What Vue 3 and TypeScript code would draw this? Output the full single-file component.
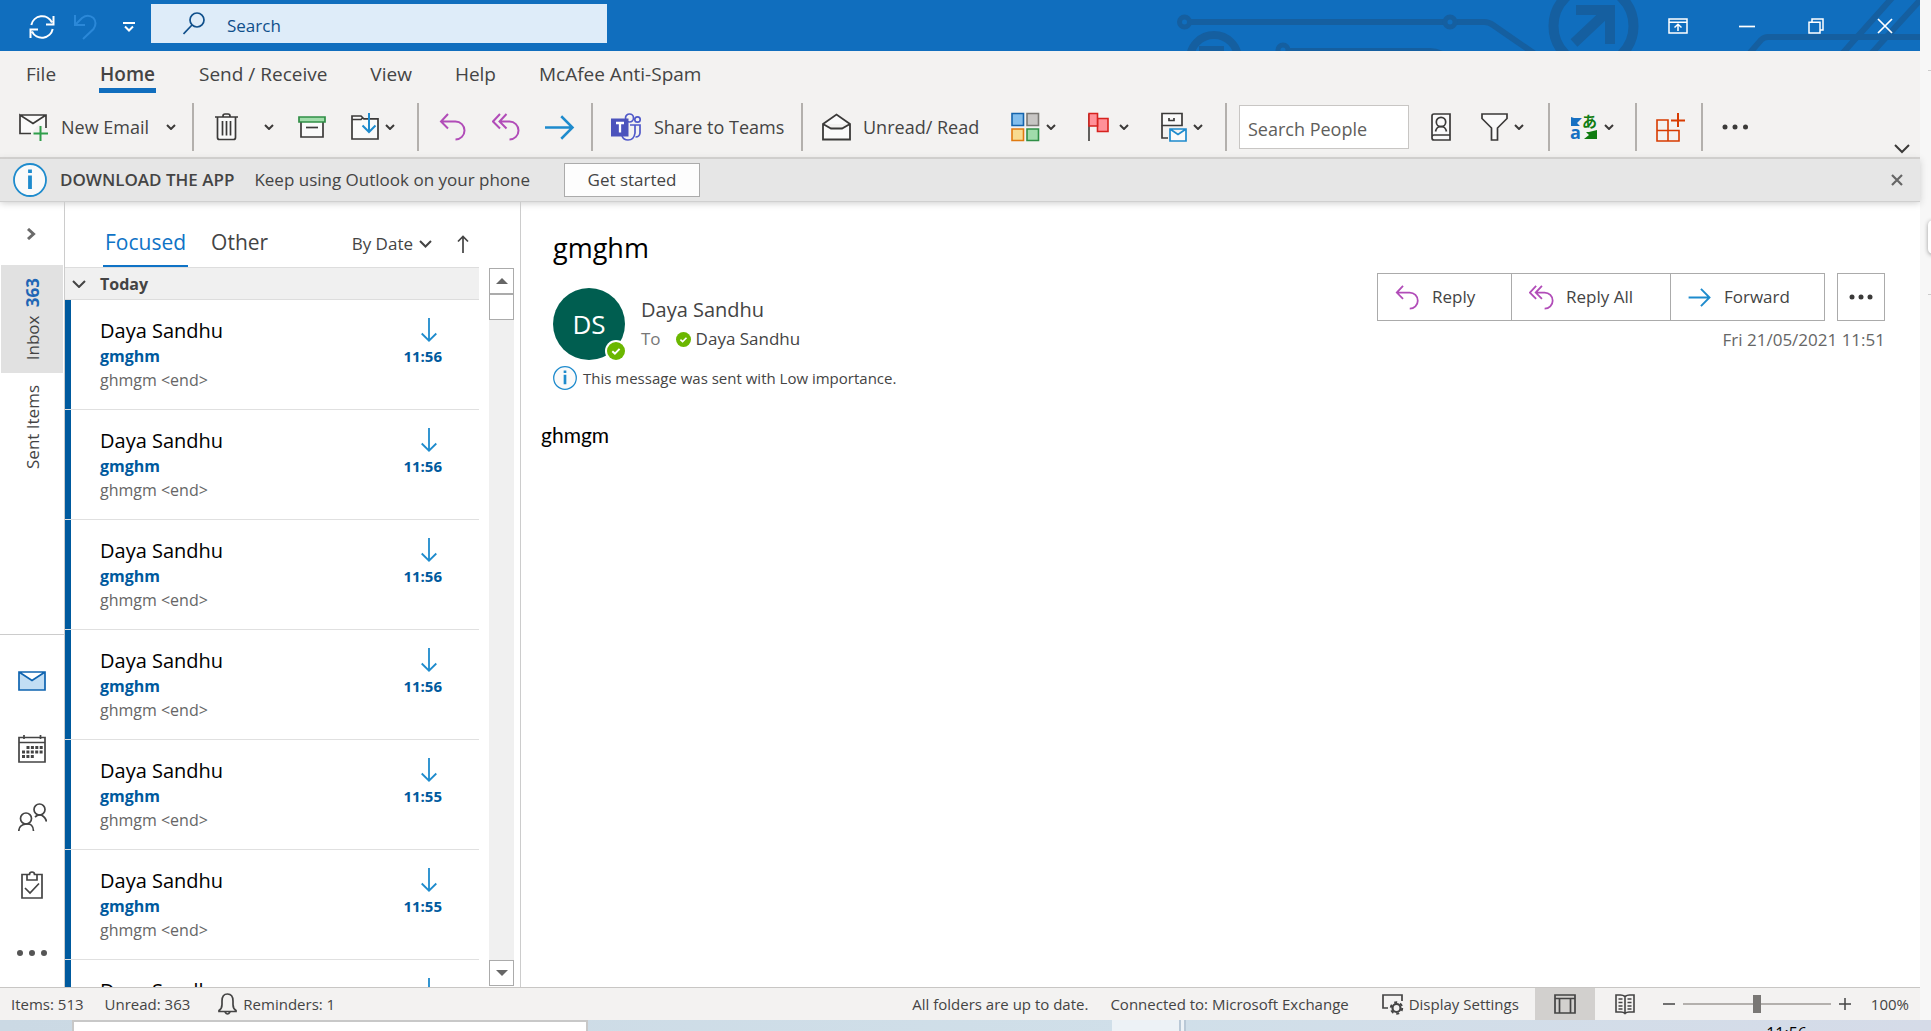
<script setup lang="ts">
import { ref } from 'vue'

interface Message {
  id: number
  sender: string
  subject: string
  preview: string
  time: string
}

const tabs = ['File', 'Home', 'Send / Receive', 'View', 'Help', 'McAfee Anti-Spam']
const activeTab = ref('Home')
const searchText = ref('')
const peopleText = ref('')
const zoom = ref(50)

const times = ['11:56', '11:56', '11:56', '11:56', '11:55', '11:55', '11:55']
const messages: Message[] = times.map((time, id) => ({
  id,
  sender: 'Daya Sandhu',
  subject: 'gmghm',
  preview: 'ghmgm <end>',
  time,
}))
</script>

<template>
  <div class="desktop">
    <svg class="symbols" aria-hidden="true">
      <symbol id="i-chev" viewBox="0 0 10 6"><path d="M1 1l4 4 4-4" fill="none" stroke="#3b3a39" stroke-width="2" /></symbol>
      <symbol id="i-reply" viewBox="0 0 28 28"><path d="M9 1L2 8.500l7 7M2 8.500h14.500a9 9 0 0 1 0 18" fill="none" stroke="#b14cb8" stroke-width="2" /></symbol>
      <symbol id="i-replyall" viewBox="0 0 28 28"><path d="M8 1L1 8.500l7 7M14.500 1l-7 7.500 7 7M7.500 8.500h10a9 9 0 0 1 0 18" fill="none" stroke="#b14cb8" stroke-width="2" /></symbol>
      <symbol id="i-forward" viewBox="0 0 24 20"><path d="M0 10h22M13 1l9 9-9 9" fill="none" stroke="#1e8bcd" stroke-width="2" /></symbol>
      <symbol id="i-down" viewBox="0 0 16 24"><path d="M8 0v23M.7 15.500L8 22.700l7.300-7.200" fill="none" stroke="#1e8bcd" stroke-width="1.800" /></symbol>
      <symbol id="i-check" viewBox="0 0 18 18"><circle cx="9" cy="9" r="9" fill="#6bb700" /><path d="M5.300 9.200l2.600 2.400 4.700-4.700" fill="none" stroke="#fff" stroke-width="2" /></symbol>
      <symbol id="i-info" viewBox="0 0 34 34"><circle cx="17" cy="17" r="16" fill="#fafafa" stroke="#1e8bcd" stroke-width="1.800" /><path d="M17 6.500v3.500M17 12.500v13.500" stroke="#1e8bcd" stroke-width="3.800" /></symbol>
    </svg>

    <div class="screen">
      <div class="window">
        <header class="titlebar">
          <svg class="circuit" viewBox="0 0 750 51" aria-hidden="true">
            <g fill="none" stroke="#155fa0" stroke-width="6">
              <circle cx="14.500" cy="22" r="5" stroke-width="5" />
              <path d="M21 22H275M287 22h27q5 0 9 3l42 29" />
              <circle cx="280" cy="22" r="5" stroke-width="5" />
              <circle cx="44" cy="59" r="24" stroke-width="8" />
              <circle cx="113" cy="50" r="5" stroke-width="5" />
              <path d="M120 51h140q6 0 12 3" />
              <circle cx="423.500" cy="26" r="40" stroke-width="10" />
              <path d="M406 10h34v34M404 43l34-32" stroke-width="10" />
              <path d="M578 55l13-15q3-3 7-3h152M671 55l51-57M700 55l52-57" />
            </g>
            <path d="M29 46h25v5H29z" fill="#155fa0" />
          </svg>
          <div class="quick">
            <button class="bare sync" aria-label="Send/Receive all folders">
              <svg width="26" height="26" viewBox="0 0 26 26" fill="none" stroke="#fff" stroke-width="2"><path d="M2.300 11A11 11 0 0 1 23 8.500M24.500 2v8.500H17M23.700 15A11 11 0 0 1 3 17.500M1.500 24v-8.500H9" /></svg>
            </button>
            <button class="bare undo" aria-label="Undo">
              <svg width="24" height="26" viewBox="0 0 24 26" fill="none" stroke="#2b88d8" stroke-width="2"><path d="M1 1v10h10M1.500 10.500L8 4q6-4.500 11.500 0 4 5 0 11L9 25" /></svg>
            </button>
            <button class="bare more" aria-label="Customise Quick Access Toolbar">
              <svg width="12" height="10" viewBox="0 0 12 10" fill="none" stroke="#fff" stroke-width="2"><path d="M0 1h12M2 4.500l4 4 4-4" /></svg>
            </button>
          </div>
          <label class="search">
            <svg width="22" height="23" viewBox="0 0 22 23" fill="none" stroke="#0f4f8b" stroke-width="1.700"><circle cx="14" cy="8" r="7" /><path d="M9 13l-8.500 9" /></svg>
            <input v-model="searchText" type="text" placeholder="Search" aria-label="Search" />
          </label>
          <div class="winctl">
            <button class="bare" aria-label="Ribbon display options">
              <svg width="20" height="16" viewBox="0 0 20 16" fill="none" stroke="#fff" stroke-width="1.500"><path d="M1 1h18v14H1zM1 4.200h18M10 13V6.500M6.500 9.500L10 6.200l3.500 3.300" /></svg>
            </button>
            <button class="bare" aria-label="Minimise">
              <svg width="16" height="16" viewBox="0 0 16 16" stroke="#fff" stroke-width="1.700"><path d="M0 8.500h16" /></svg>
            </button>
            <button class="bare" aria-label="Restore">
              <svg width="16" height="16" viewBox="0 0 16 16" fill="none" stroke="#fff" stroke-width="1.500"><path d="M1 4.200h11V15H1zM4 4V1h11v11h-3" /></svg>
            </button>
            <button class="bare" aria-label="Close">
              <svg width="16" height="16" viewBox="0 0 16 16" stroke="#fff" stroke-width="1.700"><path d="M1 1l14 14M15 1L1 15" /></svg>
            </button>
          </div>
        </header>

        <nav class="tabs">
          <button v-for="t in tabs" :key="t" class="bare tab" :class="{ on: t === activeTab }" @click="activeTab = t">{{ t }}</button>
        </nav>

        <div class="ribbon">
          <div class="group g-new">
            <button class="bare cmd">
              <svg width="30" height="28" viewBox="0 0 30 28" fill="none" stroke-width="1.700"><path d="M1 2h26v13M12 20.500H1V2l13 8.500L27 2" stroke="#3b3a39" fill="#fafafa" /><path d="M21.500 13v15M14.500 20.500H29" stroke="#2f9e4b" stroke-width="2" /></svg>
              <span>New Email</span>
            </button>
            <button class="bare" aria-label="New items"><svg class="chev"><use href="#i-chev" /></svg></button>
          </div>
          <div class="group g-delete">
            <button class="bare" aria-label="Delete">
              <svg width="24" height="28" viewBox="0 0 24 28" fill="none" stroke="#3b3a39" stroke-width="1.700"><path d="M2.500 4v20.500q0 2 2 2h14q2 0 2-2V4" fill="#fafafa" /><path d="M0 4h23M8 4V3q0-2 2-2h3q2 0 2 2v1M7.500 8v14.500M11.500 8v14.500M15.500 8v14.500" /></svg>
            </button>
            <button class="bare" aria-label="Delete options"><svg class="chev"><use href="#i-chev" /></svg></button>
            <button class="bare" aria-label="Archive">
              <svg width="28" height="22" viewBox="0 0 28 22" fill="none" stroke-width="1.700"><path d="M3 6v15h22V6" stroke="#3b3a39" fill="#fafafa" /><path d="M1 1h26v5H1z" stroke="#2f8f46" fill="#a0dcab" /><path d="M8 11.500h12" stroke="#3b3a39" /></svg>
            </button>
            <button class="bare move" aria-label="Move">
              <svg width="28" height="28" viewBox="0 0 28 28" fill="none" stroke-width="1.700"><path d="M1 3h9l3 3.500h14V26H1z" fill="#fafafa" /><path d="M13 5.800H27V26H1V3h9l3.500 3.500M1 6.500h9l2-2" stroke="#3b3a39" /><path d="M18 0v19M11.500 12.500L18 19l6.500-6.500" stroke="#1e8bcd" stroke-width="2" /></svg>
              <svg class="chev"><use href="#i-chev" /></svg>
            </button>
          </div>
          <div class="group g-respond">
            <button class="bare" aria-label="Reply"><svg width="28" height="28"><use href="#i-reply" /></svg></button>
            <button class="bare" aria-label="Reply all"><svg width="28" height="28"><use href="#i-replyall" /></svg></button>
            <button class="bare" aria-label="Forward"><svg width="30" height="25"><use href="#i-forward" /></svg></button>
          </div>
          <div class="group g-teams">
            <button class="bare cmd">
              <svg width="31" height="28" viewBox="0 0 31 28" fill="none" stroke="#5059c9" stroke-width="1.700"><circle cx="18.500" cy="5" r="4" /><circle cx="26.500" cy="6.500" r="2.700" /><path d="M19 12h10v8q-.5 4-4.500 4M24 12v8q-1 7-7 7-4.500 0-6-4" /><path d="M0 5.500h17.500v18H0z" fill="#4b53bc" stroke="none" /><path d="M5 10h8M9 10v9.500" stroke="#fff" stroke-width="2.300" /></svg>
              <span>Share to Teams</span>
            </button>
          </div>
          <div class="group g-tags">
            <button class="bare cmd">
              <svg width="29" height="28" viewBox="0 0 29 28" fill="#fafafa" stroke="#3b3a39" stroke-width="1.800"><path d="M1 11L14.500 1.500 28 11v15.500H1zM1 11l8 4.500h11l8-4.500" /></svg>
              <span>Unread/ Read</span>
            </button>
            <button class="bare" aria-label="Categorise">
              <svg width="29" height="30" viewBox="0 0 29 30" stroke-width="1.600"><path d="M1 1.500h11.500v12H1z" fill="#83beec" stroke="#1464ac" /><path d="M16 1.500h11.500v12H16z" fill="#c8c6c4" stroke="#7a7874" /><path d="M1 17h11.500v11.500H1z" fill="#f8db8f" stroke="#e07a10" /><path d="M16 17h11.500v11.500H16z" fill="#a0dcab" stroke="#2f8f46" /></svg>
              <svg class="chev"><use href="#i-chev" /></svg>
            </button>
            <button class="bare flag" aria-label="Follow up">
              <svg width="25" height="30" viewBox="0 0 25 30" stroke-width="1.600"><path d="M1 2v27" stroke="#3b3a39" /><path d="M9.500 6.500H20v13H9.500z" fill="#ff9199" stroke="#d6231f" /><path d="M1 1.500h8.500V14H1z" fill="#ff9199" stroke="#d6231f" /></svg>
              <svg class="chev"><use href="#i-chev" /></svg>
            </button>
            <button class="bare" aria-label="Rules">
              <svg width="26" height="30" viewBox="0 0 26 30" fill="none" stroke-width="1.700"><path d="M1 1.500h20v12H1z" stroke="#3b3a39" fill="#fafafa" /><path d="M8 6v2.500h5V6M1 13.500V26h6" stroke="#3b3a39" /><path d="M9 17h16v12H9zM9 17l8 5.500 8-5.500" stroke="#1e8bcd" fill="#fafafa" /></svg>
              <svg class="chev"><use href="#i-chev" /></svg>
            </button>
          </div>
          <div class="group g-find">
            <input v-model="peopleText" class="people" type="text" placeholder="Search People" aria-label="Search People" />
            <button class="bare" aria-label="Address book">
              <svg width="28" height="28" viewBox="0 0 28 28" fill="none" stroke="#3b3a39" stroke-width="1.700"><path d="M19 1H3Q1 1 1 3v22q0 2 2 2h16zM1 24q0-2 2-2h16" fill="#fafafa" /><circle cx="10" cy="9" r="4.700" /><path d="M4.500 18.500q1-5 5.500-5t5.500 5" /></svg>
            </button>
            <button class="bare" aria-label="Filter email">
              <svg width="27" height="28" viewBox="0 0 27 28" fill="#fafafa" stroke="#3b3a39" stroke-width="1.700"><path d="M1 1h25v4.500L16.500 15v12h-6V15L1 5.500z" /></svg>
              <svg class="chev"><use href="#i-chev" /></svg>
            </button>
          </div>
          <div class="group g-lang">
            <button class="bare" aria-label="Translate">
              <svg width="28" height="28" viewBox="0 0 28 28"><text class="jp" x="12" y="14">あ</text><text class="lat" x="0" y="26">a</text><path d="M1 4v9h9l-3-3 5-5H4z" fill="#1670c2" /><path d="M27 17v9H14l5-4-3-3h3z" fill="#107c10" /></svg>
              <svg class="chev"><use href="#i-chev" /></svg>
            </button>
          </div>
          <div class="group g-addins">
            <button class="bare" aria-label="Get add-ins">
              <svg width="29" height="29" viewBox="0 0 29 29" fill="none" stroke="#d83b01" stroke-width="1.600"><path d="M1 7h11v21H1zM1 17.500h22V28H1z" /><path d="M15 7.500h14M22 0v14" stroke-width="2" /></svg>
            </button>
          </div>
          <div class="group g-more">
            <button class="bare" aria-label="More commands">
              <svg width="26" height="6" viewBox="0 0 26 6" fill="#3b3a39"><circle cx="3" cy="3" r="2.500" /><circle cx="13" cy="3" r="2.500" /><circle cx="23.500" cy="3" r="2.500" /></svg>
            </button>
          </div>
          <button class="bare collapse" aria-label="Expand ribbon">
            <svg width="16" height="10" viewBox="0 0 16 10" fill="none" stroke="#3b3a39" stroke-width="2"><path d="M1 1l7 7 7-7" /></svg>
          </button>
        </div>

        <div class="banner">
          <svg width="34" height="34"><use href="#i-info" /></svg>
          <strong>DOWNLOAD THE APP</strong>
          <span>Keep using Outlook on your phone</span>
          <button class="start">Get started</button>
          <button class="bare dismiss" aria-label="Dismiss">
            <svg width="12" height="12" viewBox="0 0 12 12" stroke="#666" stroke-width="2.200"><path d="M1 1l10 10M11 1L1 11" /></svg>
          </button>
        </div>

        <div class="body">
          <aside class="rail">
            <button class="bare expand" aria-label="Expand folder pane">
              <svg width="9" height="12" viewBox="0 0 9 12" fill="none" stroke="#6a6a6a" stroke-width="3"><path d="M1 1l5.500 5L1 11" /></svg>
            </button>
            <button class="bare folder on"><span>Inbox <b>363</b></span></button>
            <button class="bare folder"><span>Sent Items</span></button>
            <nav class="modules">
              <button class="bare" aria-label="Mail">
                <svg width="28" height="20" viewBox="0 0 28 20" fill="#c2def4" stroke="#0f64b0" stroke-width="1.700"><path d="M1 1h26v18H1zM1 1l13 8.500L27 1" /></svg>
              </button>
              <button class="bare" aria-label="Calendar">
                <svg width="28" height="28" viewBox="0 0 28 28" fill="none" stroke="#444" stroke-width="1.700"><path d="M1 2.500h26V27H1zM1 7.500h26M6 0v4M22.500 0v4" /><path d="M8.500 12.500h17M4 17h21.500M4 21.500h12" stroke-width="3" stroke-dasharray="3 1.400" /></svg>
              </button>
              <button class="bare" aria-label="People">
                <svg width="29" height="28" viewBox="0 0 29 28" fill="none" stroke="#444" stroke-width="1.700"><circle cx="21.500" cy="6.500" r="5.500" /><path d="M17 14q4.500-4 8.500-.5 2.500 2 3 5" /><circle cx="8" cy="15.500" r="5.500" /><path d="M.8 28q0-6 7.200-7t7.500 7" /></svg>
              </button>
              <button class="bare" aria-label="Tasks">
                <svg width="22" height="28" viewBox="0 0 22 28" fill="none" stroke="#444" stroke-width="1.700"><path d="M6 3.500H1V27h20V3.500h-5M6 3.500V9h10V3.500h-2.500q0-2.500-2.500-2.500T8.500 3.500zM4 17l5 5 9-9.500" /></svg>
              </button>
              <button class="bare" aria-label="More">
                <svg width="30" height="6" viewBox="0 0 30 6" fill="#555"><circle cx="3" cy="3" r="3" /><circle cx="15" cy="3" r="3" /><circle cx="27" cy="3" r="3" /></svg>
              </button>
            </nav>
          </aside>

          <section class="list">
            <div class="listhead">
              <button class="bare pivot on">Focused</button>
              <button class="bare pivot">Other</button>
              <button class="bare sort">By Date
                <svg width="13" height="8" viewBox="0 0 13 8" fill="none" stroke="#444" stroke-width="2"><path d="M1 1l5.500 5.500L12 1" /></svg>
              </button>
              <button class="bare" aria-label="Sort direction">
                <svg width="12" height="18" viewBox="0 0 12 18" fill="none" stroke="#444" stroke-width="1.700"><path d="M6 18V1.500M1 6.500l5-5 5 5" /></svg>
              </button>
            </div>
            <div class="listbody">
              <div class="rows">
                <button class="bare today">
                  <svg width="14" height="8" viewBox="0 0 14 8" fill="none" stroke="#444" stroke-width="2"><path d="M1 1l6 6 6-6" /></svg>
                  Today
                </button>
                <ul>
                  <li v-for="m in messages" :key="m.id">
                    <div class="text">
                      <p class="sender">{{ m.sender }}</p>
                      <p class="subject">{{ m.subject }}</p>
                      <p class="preview">{{ m.preview }}</p>
                    </div>
                    <div class="meta">
                      <svg width="16" height="24"><use href="#i-down" /></svg>
                      <time>{{ m.time }}</time>
                    </div>
                  </li>
                </ul>
              </div>
              <div class="scroll">
                <button aria-label="Scroll up"><svg width="12" height="6" viewBox="0 0 12 6"><path d="M0 6l6-6 6 6z" fill="#666" /></svg></button>
                <div class="thumb"></div>
                <button class="end" aria-label="Scroll down"><svg width="12" height="6" viewBox="0 0 12 6"><path d="M0 0l6 6 6-6z" fill="#666" /></svg></button>
              </div>
            </div>
          </section>

          <main class="reading">
            <h1>gmghm</h1>
            <div class="head">
              <div class="avatar">DS<svg width="22" height="22" viewBox="-2 -2 22 22"><circle cx="9" cy="9" r="11" fill="#fff" /><use href="#i-check" width="18" height="18" /></svg></div>
              <div class="who">
                <p class="from">Daya Sandhu</p>
                <p class="to"><span>To</span><svg width="15" height="15"><use href="#i-check" /></svg>Daya Sandhu</p>
              </div>
              <div class="side">
                <div class="actions">
                  <div class="joined">
                    <button class="a1"><svg width="25" height="25"><use href="#i-reply" /></svg>Reply</button>
                    <button class="a2"><svg width="25" height="25"><use href="#i-replyall" /></svg>Reply All</button>
                    <button class="a3"><svg width="24" height="19"><use href="#i-forward" /></svg>Forward</button>
                  </div>
                  <button class="dots" aria-label="More actions">
                    <svg width="24" height="6" viewBox="0 0 24 6" fill="#3b3a39"><circle cx="3" cy="3" r="2.500" /><circle cx="12" cy="3" r="2.500" /><circle cx="21" cy="3" r="2.500" /></svg>
                  </button>
                </div>
                <time>Fri 21/05/2021 11:51</time>
              </div>
            </div>
            <p class="note"><svg width="24" height="24"><use href="#i-info" /></svg>This message was sent with Low importance.</p>
            <p class="content">ghmgm</p>
          </main>
        </div>

        <footer class="status">
          <span class="items">Items: 513</span>
          <span class="unread">Unread: 363</span>
          <button class="bare remind">
            <svg width="19" height="22" viewBox="0 0 19 22" fill="none" stroke="#444" stroke-width="1.700"><path d="M1 17.500q3-2 3-6V8q0-7 5.500-7T15 8v3.500q0 4 3 6v1H1zM7 19q2.500 4 5 0" /></svg>
            Reminders: 1
          </button>
          <span class="sync-state">All folders are up to date.</span>
          <span class="conn">Connected to: Microsoft Exchange</span>
          <button class="bare display">
            <svg width="22" height="21" viewBox="0 0 22 21" fill="none" stroke="#444" stroke-width="1.700"><path d="M6 14H1V1h19v6" /><circle cx="14.500" cy="14" r="4" stroke-width="2.200" /><circle cx="14.500" cy="14" r="5.700" stroke-width="2" stroke-dasharray="3 2.970" /></svg>
            Display Settings
          </button>
          <button class="bare view on" aria-label="Normal view">
            <svg width="22" height="20" viewBox="0 0 22 20" fill="none" stroke="#444" stroke-width="1.700"><path d="M1 1h20v18H1zM1 4.500h20M5.500 4.500V19M16.500 4.500V19" /></svg>
          </button>
          <button class="bare view" aria-label="Reading view">
            <svg width="20" height="21" viewBox="0 0 20 21" fill="none" stroke="#444" stroke-width="1.600"><path d="M10 2.500Q8 1 5.500 1H1v17h5q2.500 0 4 1.500 1.500-1.500 4-1.500h5V1h-4.500Q12 1 10 2.500zM10 2.500V20M3.500 5h4M3.500 8.500h4M3.500 12h4M3.500 15h4M12.500 5h4M12.500 8.500h4M12.500 12h4M12.500 15h4" /></svg>
          </button>
          <button class="bare step" aria-label="Zoom out"><svg width="12" height="12" viewBox="0 0 12 12" stroke="#444" stroke-width="1.500"><path d="M0 6h12" /></svg></button>
          <input v-model="zoom" class="zoom" type="range" min="0" max="100" aria-label="Zoom" />
          <button class="bare step" aria-label="Zoom in"><svg width="12" height="12" viewBox="0 0 12 12" stroke="#444" stroke-width="1.500"><path d="M0 6h12M6 0v12" /></svg></button>
          <span class="pct">100%</span>
        </footer>
      </div>
      <div class="behind"><i></i><b></b><i></i></div>
    </div>

    <div class="taskbar">
      <div class="tasksearch"></div>
      <div class="task"></div>
      <time>11:56</time>
    </div>
  </div>
</template>

<style>
body {
  margin: 0;
}
</style>

<style scoped>
* {
  box-sizing: border-box;
}
.desktop {
  display: flex;
  flex-direction: column;
  height: 100vh;
  overflow: hidden;
  font-family: "Open Sans", "Noto Sans", sans-serif;
  font-size: 19px;
  line-height: 24px;
  color: #444;
  background: #fff;
}
.symbols {
  position: absolute;
  width: 0;
  height: 0;
}
svg {
  display: block;
  flex: none;
}
p, h1, ul {
  margin: 0;
  padding: 0;
}
button, input {
  font: inherit;
  color: inherit;
  border-radius: 0;
}
button {
  white-space: nowrap;
}
.bare {
  display: flex;
  align-items: center;
  padding: 0;
  border: 0;
  background: none;
}
.screen {
  display: flex;
  flex: 1;
  min-height: 0;
}
.window {
  display: flex;
  flex-direction: column;
  flex: 1;
  min-width: 0;
}
.behind {
  width: 11px;
  padding-top: 70px;
  overflow: hidden;
  background: #f7f7f7;
}
.behind i {
  display: block;
  width: 3px;
  height: 1px;
  margin-left: 8px;
  background: #ccc;
}
.behind b {
  display: block;
  width: 20px;
  height: 34px;
  margin: 149px 0 40px 8px;
  border-radius: 5px;
  background: #fff;
  box-shadow: 0 1px 4px #999;
}

/* Title bar */
.titlebar {
  position: relative;
  display: flex;
  flex: none;
  height: 51px;
  background: #106ebe;
}
.circuit {
  position: absolute;
  top: 0;
  right: 0;
  width: 750px;
  height: 51px;
}
.quick {
  display: flex;
  align-items: center;
  width: 151px;
  padding: 2px 0 0 29px;
}
.undo {
  margin-left: 19px;
}
.more {
  margin-left: 25px;
}
.search {
  display: flex;
  align-items: center;
  gap: 22px;
  width: 456px;
  height: 39px;
  margin-top: 4px;
  padding: 0 0 0 32px;
  background: #deecf9;
}
.search input {
  flex: 1;
  min-width: 0;
  padding: 4px 0 0;
  border: 0;
  outline: 0;
  background: none;
  font-size: 17px;
}
.search input::placeholder {
  color: #0f4f8b;
}
.winctl {
  position: relative;
  display: flex;
  margin: 0 1px 0 auto;
}
.winctl button {
  justify-content: center;
  width: 69px;
}

/* Ribbon */
.tabs {
  display: flex;
  flex: none;
  gap: 43px;
  height: 46px;
  padding-left: 26px;
  background: #f3f2f1;
}
.tab {
  height: 42px;
  padding-top: 9px;
  border-bottom: 5px solid transparent;
}
.tab.on {
  padding-right: 1px;
  padding-left: 1px;
  font-weight: 600;
  border-color: #106ebe;
}
.ribbon {
  display: flex;
  flex: none;
  align-items: flex-start;
  height: 62px;
  padding-top: 6px;
  border-bottom: 2px solid #d2d0ce;
  background: #f3f2f1;
}
.group {
  display: flex;
  flex: none;
  align-items: center;
  height: 48px;
  border-right: 2px solid #b3b0ad;
}
.chev {
  width: 10px;
  height: 6px;
}
.cmd {
  gap: 12px;
  font-size: 18px;
}
.group button .chev {
  margin-left: 6px;
}
.group button .chev:first-child {
  margin-left: 0;
}
.g-new {
  justify-content: space-between;
  width: 194px;
  padding: 0 16px 0 19px;
}
.g-delete {
  justify-content: space-between;
  width: 225px;
  padding: 0 22px 0 21px;
}
.g-respond {
  gap: 25px;
  width: 174px;
  padding-left: 20px;
}
.g-teams {
  width: 210px;
  padding-left: 18px;
}
.g-tags {
  gap: 32px;
  width: 424px;
  padding-left: 19px;
}
.g-find {
  gap: 22px;
  width: 323px;
  padding-left: 12px;
}
.people {
  width: 170px;
  height: 44px;
  padding: 4px 8px 0;
  border: 1px solid #c8c6c4;
  background: #fff;
  font-size: 18px;
}
.people::placeholder {
  color: #605e5c;
}
.g-lang {
  width: 87px;
  padding-left: 20px;
}
.g-addins {
  width: 66px;
  padding-left: 19px;
}
.g-more {
  padding-left: 19px;
  border: 0;
}
.jp {
  font: 700 15px "Noto Sans CJK JP", sans-serif;
  fill: #107c10;
}
.lat {
  font: 700 18px "Open Sans", sans-serif;
  fill: #1670c2;
}
.collapse {
  align-self: flex-end;
  margin: 0 10px 3px auto;
}

/* Banner */
.banner {
  position: relative;
  z-index: 1;
  display: flex;
  flex: none;
  align-items: center;
  height: 43px;
  padding: 0 17px 0 13px;
  border-bottom: 1px solid #d0d0d0;
  background: #e6e6e6;
  box-shadow: 0 1px 7px #ccc;
  font-size: 17px;
}
.banner strong {
  margin: 0 20px 0 13px;
  font-weight: 600;
}
.start {
  width: 136px;
  height: 34px;
  margin-left: 34px;
  padding: 0;
  border: 1px solid #ababab;
  background: #fdfdfd;
}
.dismiss {
  margin-left: auto;
}

/* Folder rail */
.body {
  display: flex;
  flex: 1;
  min-height: 0;
}
.rail {
  display: flex;
  flex: none;
  flex-direction: column;
  width: 65px;
  border-right: 1px solid #ccc;
  font-size: 17px;
}
.expand {
  height: 63px;
  padding-left: 27px;
}
.folder {
  justify-content: center;
  width: 62px;
  height: 108px;
  margin-left: 1px;
  padding-left: 2px;
}
.folder.on {
  background: #e1e1e1;
}
.folder span {
  writing-mode: vertical-rl;
  transform: rotate(180deg);
}
.folder b {
  margin-top: 4px;
  color: #1f66b5;
}
.modules {
  margin-top: auto;
  padding-top: 12px;
  border-top: 1px solid #ccc;
}
.modules button {
  justify-content: center;
  width: 64px;
  height: 68px;
}

/* Message list */
.list {
  display: flex;
  flex: none;
  flex-direction: column;
  width: 456px;
  border-right: 1px solid #ccc;
}
.listhead {
  display: flex;
  flex: none;
  align-items: center;
  width: 414px;
  height: 66px;
  padding: 0 10px 0 38px;
  border-bottom: 1px solid #ddd;
}
.pivot {
  align-self: flex-end;
  height: 48px;
  margin-right: 21px;
  padding: 0 2px 1px;
  border-bottom: 2px solid transparent;
  font-size: 21px;
}
.pivot.on {
  color: #0f73c6;
  border-color: #0f73c6;
}
.sort {
  gap: 6px;
  margin: 18px 25px 0 auto;
  font-size: 17px;
}
.sort + button {
  margin-top: 18px;
}
.listbody {
  display: flex;
  flex: 1;
  min-height: 0;
  justify-content: space-between;
}
.rows {
  width: 414px;
  overflow: hidden;
}
.today {
  gap: 14px;
  width: 100%;
  height: 32px;
  padding-left: 7px;
  border-bottom: 1px solid #ddd;
  background: #f0f0f0;
  font-size: 16px;
  font-weight: 700;
}
ul {
  list-style: none;
}
li {
  display: flex;
  justify-content: space-between;
  height: 110px;
  padding: 18px 37px 0 35px;
  border-bottom: 1px solid #e0e0e0;
  background: linear-gradient(#005a9e, #005a9e) left / 6px 100% no-repeat;
}
.sender {
  height: 26px;
  font-size: 20px;
  line-height: 26px;
  color: #000;
}
.subject, .meta time {
  line-height: 24px;
  font-weight: 700;
  color: #005a9e;
}
.subject {
  font-size: 16px;
}
.preview {
  font-size: 16px;
  line-height: 24px;
  color: #666;
}
.meta {
  display: flex;
  flex-direction: column;
  align-items: flex-end;
}
.meta svg {
  margin-right: 5px;
}
.meta time {
  margin-top: 2px;
  font-size: 15px;
}
.scroll {
  display: flex;
  flex-direction: column;
  width: 25px;
  margin: 0 6px 1px 0;
  background: #f0f0f0;
}
.scroll button {
  display: flex;
  align-items: center;
  justify-content: center;
  height: 26px;
  padding: 0;
  border: 1px solid #ababab;
  background: #fff;
}
.thumb {
  height: 26px;
  border: 1px solid #ababab;
  background: #fff;
}
.scroll .end {
  margin-top: auto;
}

/* Reading pane */
.reading {
  flex: 1;
  min-width: 0;
  padding: 28px 35px 0 32px;
}
h1 {
  font-size: 27px;
  font-weight: 400;
  line-height: 36px;
  color: #000;
}
.head {
  display: flex;
  align-items: flex-start;
  height: 98px;
}
.avatar {
  position: relative;
  flex: none;
  width: 72px;
  height: 72px;
  margin-top: 22px;
  border-radius: 50%;
  background: #005e50;
  font-size: 26px;
  line-height: 72px;
  text-align: center;
  color: #fff;
}
.avatar svg {
  position: absolute;
  right: -2px;
  bottom: -2px;
}
.who {
  padding: 32px 0 0 16px;
}
.from {
  font-size: 20px;
}
.to {
  display: flex;
  align-items: center;
  height: 34px;
  font-size: 17px;
}
.to span {
  color: #777;
}
.to svg {
  margin: 0 5px 0 15px;
}
.side {
  margin-left: auto;
  padding-top: 7px;
  text-align: right;
  font-size: 17px;
}
.side > time {
  display: block;
  margin-top: 7px;
  color: #666;
}
.actions, .joined {
  display: flex;
}
.actions {
  gap: 12px;
}
.actions button {
  display: flex;
  align-items: center;
  gap: 12px;
  height: 48px;
  padding: 0 0 0 17px;
  border: 1px solid #ababab;
  background: #fff;
}
.joined button + button {
  border-left: 0;
}
.a1 {
  width: 135px;
}
.a2 {
  width: 159px;
}
.a3 {
  width: 154px;
}
.actions .dots {
  justify-content: center;
  width: 48px;
  padding: 0;
}
.note {
  display: flex;
  align-items: center;
  gap: 6px;
  height: 28px;
  font-size: 15px;
}
.content {
  margin: 27px 0 0 -12px;
  font-family: Lato, sans-serif;
  font-size: 21px;
  line-height: 32px;
  color: #000;
}

/* Status bar */
.status {
  display: flex;
  flex: none;
  align-items: center;
  height: 33px;
  padding: 0 11px;
  border-top: 1px solid #c8c6c4;
  background: #f3f2f1;
  font-size: 15px;
}
.unread {
  margin-left: 21px;
}
.remind {
  gap: 6px;
  margin-left: 28px;
}
.sync-state {
  margin-left: auto;
}
.conn {
  margin-left: 22px;
}
.display {
  gap: 5px;
  margin: 0 16px 0 33px;
}
.view {
  justify-content: center;
  width: 60px;
  height: 32px;
}
.view.on {
  background: #d2d0ce;
}
.step {
  margin-left: 8px;
}
.zoom {
  width: 148px;
  height: 18px;
  margin: 0 0 0 8px;
  appearance: none;
  background: linear-gradient(#b3b0ad, #b3b0ad) center / 100% 2px no-repeat;
}
.zoom::-webkit-slider-thumb {
  appearance: none;
  width: 8px;
  height: 18px;
  background: #797775;
}
.pct {
  margin-left: 20px;
}

/* Strip of the desktop taskbar */
.taskbar {
  position: relative;
  display: flex;
  flex: none;
  height: 11px;
  padding-left: 72px;
  overflow: hidden;
  background: linear-gradient(90deg, #cbd9e4, #d0dfe9 60%, #d5dbe8);
}
.tasksearch {
  width: 516px;
  border: 2px solid #c8c8c8;
  border-bottom: 0;
  background: #fff;
}
.task {
  width: 74px;
  margin-left: 524px;
  border-right: 7px double #b9c8d6;
  background: #edf2f6;
}
.taskbar time {
  margin: 3px 124px 0 auto;
  font-size: 16px;
  line-height: 20px;
  color: #000;
}
</style>
